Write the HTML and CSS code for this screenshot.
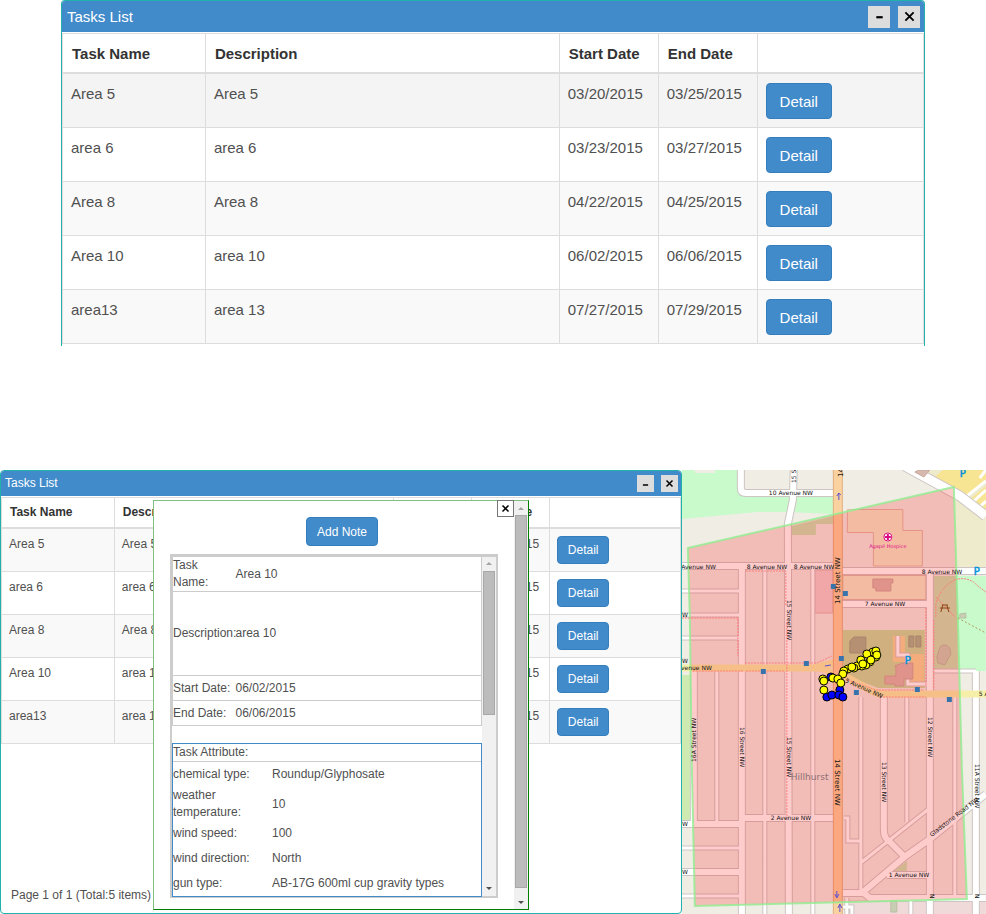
FILE: index.html
```html
<!DOCTYPE html>
<html lang="en">
<head>
<meta charset="utf-8">
<meta name="viewport" content="width=device-width, initial-scale=1">
<title>Tasks List</title>
<link rel="stylesheet" href="styles.css">
</head>
<body>
<section class="window window-large">
  <header class="titlebar">
    <h2>Tasks List</h2>
    <button class="tool" type="button" aria-label="Minimize"><svg viewBox="0 0 12 12"><path d="M2.500 6.800h7" stroke-width="2.400"/></svg></button>
    <button class="tool" type="button" aria-label="Close"><svg viewBox="0 0 12 12"><path d="M1.500 1.500l9 9M10.500 1.500l-9 9" stroke-width="2"/></svg></button>
  </header>
  <table class="tasks">
    <colgroup><col class="c-name"><col class="c-desc"><col class="c-date"><col class="c-date"><col></colgroup>
    <thead><tr><th>Task Name</th><th>Description</th><th>Start Date</th><th>End Date</th><th></th></tr></thead>
    <tbody>
      <tr class="active"><td>Area 5</td><td>Area 5</td><td>03/20/2015</td><td>03/25/2015</td><td><button class="btn" type="button">Detail</button></td></tr>
      <tr><td>area 6</td><td>area 6</td><td>03/23/2015</td><td>03/27/2015</td><td><button class="btn" type="button">Detail</button></td></tr>
      <tr><td>Area 8</td><td>Area 8</td><td>04/22/2015</td><td>04/25/2015</td><td><button class="btn" type="button">Detail</button></td></tr>
      <tr><td>Area 10</td><td>area 10</td><td>06/02/2015</td><td>06/06/2015</td><td><button class="btn" type="button">Detail</button></td></tr>
      <tr><td>area13</td><td>area 13</td><td>07/27/2015</td><td>07/29/2015</td><td><button class="btn" type="button">Detail</button></td></tr>
    </tbody>
  </table>
</section>

<main class="workspace">
  <section class="window window-small">
    <header class="titlebar">
      <h2>Tasks List</h2>
      <button class="tool" type="button" aria-label="Minimize"><svg viewBox="0 0 12 12"><path d="M2.500 8h7" stroke-width="2"/></svg></button>
      <button class="tool" type="button" aria-label="Close"><svg viewBox="0 0 12 12"><path d="M2 2l8 8M10 2l-8 8" stroke-width="2"/></svg></button>
    </header>
    <table class="tasks">
      <colgroup><col class="c-name"><col class="c-desc"><col class="c-date"><col class="c-date"><col></colgroup>
      <thead><tr><th>Task Name</th><th>Description</th><th>Start Date</th><th>End Date</th><th></th></tr></thead>
      <tbody>
        <tr><td>Area 5</td><td>Area 5</td><td>03/20/2015</td><td>03/25/2015</td><td><button class="btn" type="button">Detail</button></td></tr>
        <tr><td>area 6</td><td>area 6</td><td>03/23/2015</td><td>03/27/2015</td><td><button class="btn" type="button">Detail</button></td></tr>
        <tr><td>Area 8</td><td>Area 8</td><td>04/22/2015</td><td>04/25/2015</td><td><button class="btn" type="button">Detail</button></td></tr>
        <tr><td>Area 10</td><td>area 10</td><td>06/02/2015</td><td>06/06/2015</td><td><button class="btn" type="button">Detail</button></td></tr>
        <tr><td>area13</td><td>area 13</td><td>07/27/2015</td><td>07/29/2015</td><td><button class="btn" type="button">Detail</button></td></tr>
      </tbody>
    </table>
    <p class="pager">Page 1 of 1 (Total:5 items)</p>

    <div class="dialog" role="dialog" aria-label="Task detail">
      <div class="dialog-main">
        <button class="dialog-close" type="button" aria-label="Close"><svg viewBox="0 0 12 12"><path d="M2 2l8 8M10 2l-8 8" stroke-width="2"/></svg></button>
        <button class="btn add-note" type="button">Add Note</button>
        <div class="frame">
          <div class="frame-main">
            <table class="facts">
              <colgroup><col class="c-label"><col></colgroup>
              <tr><td>Task<br>Name:</td><td>Area 10</td></tr>
              <tr class="tall"><td>Description:</td><td>area 10</td></tr>
              <tr><td>Start Date:</td><td>06/02/2015</td></tr>
              <tr><td>End Date:</td><td>06/06/2015</td></tr>
            </table>
            <div class="attributes">
              <h3>Task Attribute:</h3>
              <table>
                <colgroup><col class="c-attr"><col></colgroup>
                <tr><td>chemical type:</td><td>Roundup/Glyphosate</td></tr>
                <tr><td>weather<br>temperature:</td><td>10</td></tr>
                <tr><td>wind speed:</td><td>100</td></tr>
                <tr><td>wind direction:</td><td>North</td></tr>
                <tr><td>gun type:</td><td>AB-17G 600ml cup gravity types</td></tr>
              </table>
            </div>
          </div>
          <div class="scroll scroll-inner"><i class="up"></i><span class="thumb"></span><i class="down"></i></div>
        </div>
      </div>
      <div class="scroll scroll-outer"><i class="up"></i><span class="thumb"></span><i class="down"></i></div>
    </div>
  </section>

  <svg class="map" viewBox="682 470 304 444" preserveAspectRatio="xMidYMid slice" role="img" aria-label="Street map of Hillhurst">
    <defs>
      <g id="minor">
        <path d="M682 591H742M682 615H742M682 638H742M765 568V914M813 568V914M717 671V824M682 848H742M682 896H742M861 697V893M907 697V822M955 697V897M934 671H976M862 862L930 808M844 818H848V841H861M847 914V898M911 899V914M842 907H852V914M927 684H908V655H898V636"/>
      </g>
      <g id="major">
        <path d="M741 466V488Q741 493 746 493H834M794 466L793 500L788 524L789 914M682 566H836M842 571H986M742 566V914M694 671V822M682 824H742M682 872H742M745 818H836M842 604H930M930 572V914M976 671V914M884 697V830Q884 838 890 842L905 857M843 893H862L906 856L930 839L986 794M887 875H930M864 893L870 898H986"/>
      </g>
    </defs>
    <rect class="land" x="682" y="470" width="304" height="444"/>
    <path class="park" d="M682 470H738V490Q740 496 746 497H834V514L788 512H758L682 519Z"/>
    <path class="land" d="M695 470H715V473H695ZM745 470H790V489H745ZM798 470H834V489H798Z"/>
    <path class="meadow" d="M682 675H690V821H682Z"/>
    <path class="beige" d="M955 484L986 518V568H955Z"/>
    <path class="beige" d="M925 470H986V518L960 500Z"/>
    <path class="yellow" d="M943 470L935 477L966 496L986 480V470Z"/>
    <path class="yellow" d="M986 486L967 502L986 514Z"/>
    <path class="bay" d="M966 497L986 481M973 502L986 490M980 507L986 501M986 470L980 478"/>
    <path class="wood" d="M792 526L834 516V524H816V535H792Z"/>
    <path class="wood" d="M934 576H958V671H934Z"/>
    <path class="park" d="M957 576H986V671H959Z"/>
    <path class="school" d="M843 630H925V688H878L843 674Z"/>
    <path class="lot" d="M893 636H905V654H924V687H909V662H893Z"/>
    <path class="care" d="M847.500 509.500H903V530.500H922.500V566H873.500V532.500H847.500Z"/>
    <path class="care" d="M843 575.500H926V599.500H843Z"/>
    <path class="pinkland" d="M845 900H986V914H845Z"/>
    <path class="tint" d="M815 570H833V613H815Z"/>
    <use href="#minor" class="case-minor"/><use href="#major" class="case-major"/>
    <path class="case-top" d="M905 466L960 496L986 516"/>
    <use href="#minor" class="fill-minor"/><use href="#major" class="fill-major"/>
    <path class="fill-top" d="M905 466L960 496L986 516"/>
    <path class="gold" d="M682 668H818Q828 668 838 678"/>
    <path class="gold" d="M814 668L838 662"/>
    <path class="gold" d="M840 673L872 691Q878 694 886 694H986"/>
    <path class="orange-case" d="M838 466V500L838 914"/>
    <path class="orange" d="M838 466V500L838 914"/>
    <path class="building" d="M873 579H893V583H891V591H876V588H873Z"/>
    <path class="building" d="M903 663H913V679H904V686H895V684H885V676H896V666H895Z"/>
    <path class="building" d="M919 470H930L924 477L915 472Z"/>
    <path class="court" d="M850 641L854 637H866V649L862 653H850ZM909 636H914V647H909ZM916 636H921V647H916Z"/>
    <path class="oval" d="M940 647Q945 642 950 648L951 654L945 665L938 663L937 657Z"/>
    <path class="oval" d="M891 901H897V912H891ZM960 614L966 613V618H960Z"/>
    <path class="wood" d="M894 871L907 861V871Z"/>
    <path class="zone" d="M688 548L954 487L958 618L962 768L967 899L695 906L692 768L690 618Z"/>
    <path class="dash" d="M746 571H786V606M787 622V818M682 618H738V656M745 663H817L832 656M693 671H743M746 671H784M936 617V604Q942 584 958 579Q970 577 978 586L986 592M936 597L955 617M926 608V686M934 620V690M848 680L876 690H923M880 697H926"/>
    <path class="trail" d="M958 618L986 633"/>
    <g class="stop"><path d="M831 584h5v5h-5zM843 591h5v5h-5zM804 661h5v5h-5zM761 669h5v5h-5zM839 656h5v5h-5zM854 690h5v5h-5zM915 687h5v5h-5zM947 697h5v5h-5z"/></g>
    <g class="arrow"><path d="M839 500V494M837 496L839 493L841 495M825 666L831 665M837 891V897M835 894L837 898L839 894M840 912V905M838 908L840 904L842 908"/></g>
    <circle class="cross-ring" cx="888" cy="537" r="4"/><path class="cross" d="M888 534V540M885 537H891"/>
    <path class="picnic" d="M942 605H948M940 608H950M943 605L941 612M947 605L949 612"/>
    <g class="street">
      <text x="769" y="495">10 Avenue NW</text>
      <text x="716" y="569" text-anchor="end">8 Avenue NW</text>
      <text x="747" y="569">8 Avenue NW</text><text x="794" y="569">8 Avenue NW</text>
      <text x="922" y="574">8 Avenue NW</text><text x="865" y="606">7 Avenue NW</text>
      <text x="712" y="670" text-anchor="end">5 Avenue NW</text>
      <text x="771" y="820">2 Avenue NW</text><text x="889" y="877">1 Avenue NW</text>
      <text x="979" y="696">5 Avenue NW</text>
      <text x="688" y="617" text-anchor="end">NW</text><text x="688" y="663" text-anchor="end">NW</text>
      <text x="688" y="826" text-anchor="end">NW</text><text x="688" y="874" text-anchor="end">NW</text>
      <text transform="translate(796 483) rotate(-90)">15 Street NW</text>
      <text transform="translate(787 600) rotate(90)">15 Street NW</text>
      <text transform="translate(787 737) rotate(90)">15 Street NW</text>
      <text transform="translate(740 727) rotate(90)">16 Street NW</text>
      <text transform="translate(696 762) rotate(-90)">16A Street NW</text>
      <text transform="translate(882 762) rotate(90)">13 Street NW</text>
      <text transform="translate(928 717) rotate(90)">12 Street NW</text>
      <text transform="translate(975 764) rotate(90)">11A Street NW</text>
      <text transform="translate(932 837) rotate(-38)">Gladstone Road NW</text>
      <text transform="translate(845 682) rotate(24)">5 Avenue NW</text>
      <text transform="translate(930 894) rotate(90)">N</text><text transform="translate(975 894) rotate(90)">N</text>
    </g>
    <g class="street street-main">
      <text transform="translate(840 604) rotate(-90)">14 Street NW</text>
      <text transform="translate(835 759) rotate(90)">14 Street NW</text>
      <text transform="translate(843 477) rotate(-90)">14</text>
    </g>
    <text class="hospice" x="888" y="548" text-anchor="middle">Agapé Hospice</text>
    <text class="place" x="791" y="780">Hillhurst</text>
    <g class="parking"><text x="905" y="664">P</text><text x="960" y="477">P</text><text x="974" y="575">P</text></g>
    <g class="dot blue"><circle cx="831" cy="677" r="4"/><circle cx="827" cy="697" r="4"/><circle cx="832" cy="695" r="4"/><circle cx="840" cy="690" r="4"/><circle cx="839" cy="695" r="4"/><circle cx="843" cy="697" r="4"/></g>
    <g class="dot yellow-dot"><circle cx="876" cy="657" r="4"/><circle cx="873" cy="652" r="4"/><circle cx="870" cy="662" r="4"/><circle cx="866" cy="665" r="4"/><circle cx="862" cy="666" r="4"/><circle cx="857" cy="666" r="4"/><circle cx="854" cy="668" r="4"/><circle cx="848" cy="669" r="4"/><circle cx="844" cy="671" r="4"/><circle cx="867" cy="654" r="4"/><circle cx="876" cy="651" r="4"/><circle cx="877" cy="655" r="4"/><circle cx="861" cy="660" r="4"/><circle cx="871" cy="660" r="4"/><circle cx="863" cy="664" r="4"/><circle cx="852" cy="667" r="4"/><circle cx="843" cy="674" r="4"/><circle cx="833" cy="678" r="4"/><circle cx="838" cy="679" r="4"/><circle cx="841" cy="683" r="4"/><circle cx="823" cy="679" r="4"/><circle cx="824" cy="681" r="4"/><circle cx="824" cy="690" r="4"/></g>
  </svg>
</main>
</body>
</html>
```
FILE: styles.css
```css
* { box-sizing: border-box; }
body {
  margin: 0;
  background: #fff;
  color: #505050;
  font-family: "Liberation Sans", Arial, sans-serif;
}
h2, h3, p { margin: 0; font-weight: normal; }
button { font-family: inherit; padding: 0; cursor: pointer; }
table { width: 100%; border-collapse: collapse; table-layout: fixed; }

/* Windows */
.window { border: 1px solid #20b2aa; border-radius: 4px 4px 0 0; background: #fff; }
.window-large {
  width: 88%;
  max-width: 864px;
  margin: 0 auto 124px;
  padding-bottom: 2px;
  border-bottom: 0;
  font-size: 15px;
  line-height: 21px;
}
.titlebar {
  display: flex;
  align-items: center;
  gap: 8px;
  height: 31px;
  padding: 0 4px 0 5px;
  margin-bottom: 1px;
  border-radius: 3px 3px 0 0;
  background: #428bca;
  color: #fff;
}
.titlebar h2 { flex: 1; font-size: inherit; }
.tool {
  display: grid;
  place-items: center;
  width: 22px;
  height: 22px;
  border: 0;
  background: #ddd;
}
.tool svg { width: 11px; height: 11px; fill: none; stroke: #000; }

/* Task table */
.c-name { width: 16.6%; }
.c-desc { width: 41.1%; }
.c-date { width: 11.5%; }
.tasks th, .tasks td {
  border: 1px solid #ddd;
  padding: 9px 8px 8px;
  text-align: left;
  vertical-align: top;
  white-space: nowrap;
}
.tasks th { border-bottom-width: 2px; color: #333; padding-left: 9px; }
.tasks tbody tr { height: 54px; }
.tasks tbody tr:nth-child(odd) { background: #f9f9f9; }
.tasks tbody tr.active { background: #f4f4f4; }
.btn {
  display: block;
  width: 66px;
  height: 36px;
  border: 1px solid #357ebd;
  border-radius: 4px;
  background: #428bca;
  color: #fff;
  font-size: inherit;
}

/* Lower workspace: task window beside the map */
.workspace { display: grid; grid-template-columns: 69.2% 1fr; min-height: 444px; }
.window-small {
  position: relative;
  border-radius: 4px;
  font-size: 12px;
  line-height: 17px;
}
.window-small .titlebar { height: 25px; gap: 7px; padding-right: 3px; padding-left: 4px; }
.window-small .tool { width: 17px; height: 17px; }
.window-small .tool svg, .dialog-close svg { width: 9px; height: 9px; fill: none; stroke: #000; }
.window-small .tasks th { padding: 6px 7px 6px 8px; }
.window-small .tasks td { padding: 7px 7px 5px; }
.window-small .tasks tbody tr { height: 43px; }
.window-small .btn { width: 52px; height: 28px; }
.pager { padding: 143px 0 0 10px; }

/* Detail dialog */
.dialog {
  position: absolute;
  top: 29px;
  left: 152px;
  display: flex;
  width: 376px;
  height: 410px;
  border: 1px solid #008000;
  border-top-color: #7fbf7f;
  border-left-color: #7fbf7f;
  background: #fff;
}
.dialog-main { position: relative; flex: 1; padding: 16px 16px 0; }
.dialog-close {
  position: absolute;
  top: -1px;
  right: 0;
  display: grid;
  place-items: center;
  width: 17px;
  height: 17px;
  border: 1px solid #777;
  background: #fff;
}
.window-small .add-note { width: 72px; height: 29px; margin: 0 auto 8px 136px; }
.frame { display: flex; height: 344px; border: 2px solid #ccc; border-top-width: 3px; }
.frame-main { flex: 1; min-width: 0; }
.frame td { padding: 0; }
.facts { margin-bottom: 17px; }
.facts tr { height: 25px; border: 1px solid #ccc; border-top: 0; }
.facts .tall { height: 84px; }
.c-label { width: 63px; }
.c-attr { width: 99px; }
.attributes { border: 1px solid #428bca; }
.attributes h3 { border-bottom: 1px solid #ccc; font-size: inherit; }
.attributes tr { height: 25px; }

.scroll { display: flex; flex-direction: column; align-items: center; background: #f1f1f1; }
.scroll-inner { width: 14px; padding: 5px 0 6px; }
.scroll-outer { width: 14px; padding: 6px 0 5px; }
.thumb { width: 12px; border: 1px solid #a8a8a8; background: #bcbcbc; }
.scroll-inner .thumb { height: 144px; margin: 6px 0 auto; }
.scroll-outer .thumb { flex: 1; margin: 5px 0 13px; }
.up, .down { border: 3px solid transparent; }
.up { border-top: 0; border-bottom-color: #a3a3a3; }
.down { border-bottom: 0; border-top-color: #505050; }

/* Map */
.map { width: 100%; height: 444px; font-family: "DejaVu Sans", sans-serif; }
.land { fill: #f0ede5; }
.park { fill: #c8facc; }
.meadow { fill: #cdebb0; }
.beige { fill: #eeeacc; }
.yellow { fill: #f7e593; }
.bay { stroke: #fff; stroke-width: 3; }
.wood { fill: #c9e3b4; }
.school { fill: #c5dd9f; }
.lot { fill: #f2d79c; }
.care { fill: #f0ebcb; stroke: #dfb8a8; }
.pinkland { fill: #f0d9d9; }
.tint { fill: #eed1d1; stroke: #dfb0b0; }
.court { fill: #a3b58f; stroke: #98a388; }
.oval { fill: #c8ceb4; stroke: #b8bea4; }
.building { fill: #d7b8ae; stroke: #c8a89e; }
.case-minor, .case-major, .case-top, .fill-minor, .fill-major, .fill-top,
.orange, .orange-case, .gold { fill: none; }
.case-minor { stroke: #cdc5c3; stroke-width: 5; }
.case-major { stroke: #cdc5c3; stroke-width: 8; }
.case-top { stroke: #cdc5c3; stroke-width: 11; }
.fill-minor { stroke: #fff; stroke-width: 3; }
.fill-major { stroke: #fff; stroke-width: 6; }
.fill-top { stroke: #fff; stroke-width: 9; }
.orange-case { stroke: #e0b080; stroke-width: 10; }
.orange { stroke: #fad2a0; stroke-width: 8; }
.gold { stroke: #f5efaa; stroke-width: 7; }
.zone { fill: rgba(255, 0, 0, .2); stroke: #90ee90; stroke-width: 2; stroke-opacity: .8; }
.dash { fill: none; stroke: #ff7d7d; stroke-dasharray: 2 1; }
.trail { stroke: #b39a5c; stroke-dasharray: 2 2; }
.stop { fill: #3973ac; }
.arrow { fill: none; stroke: #5b51d0; }
.cross-ring { fill: #fff; stroke: #da0c85; }
.cross { stroke: #da0c85; stroke-width: 2; }
.picnic { fill: none; stroke: #8b4513; }
.street { font-size: 6px; fill: #111; }
.street-main { font-size: 7px; }
.hospice { font-size: 5px; fill: #e0108a; }
.place { font-size: 9px; fill: #8d6f74; }
.parking { font-size: 10px; fill: #0092da; stroke: #0092da; stroke-width: 0.5; }
.dot { stroke: #000; }
.blue { fill: #00f; }
.yellow-dot { fill: #ff0; }
```
